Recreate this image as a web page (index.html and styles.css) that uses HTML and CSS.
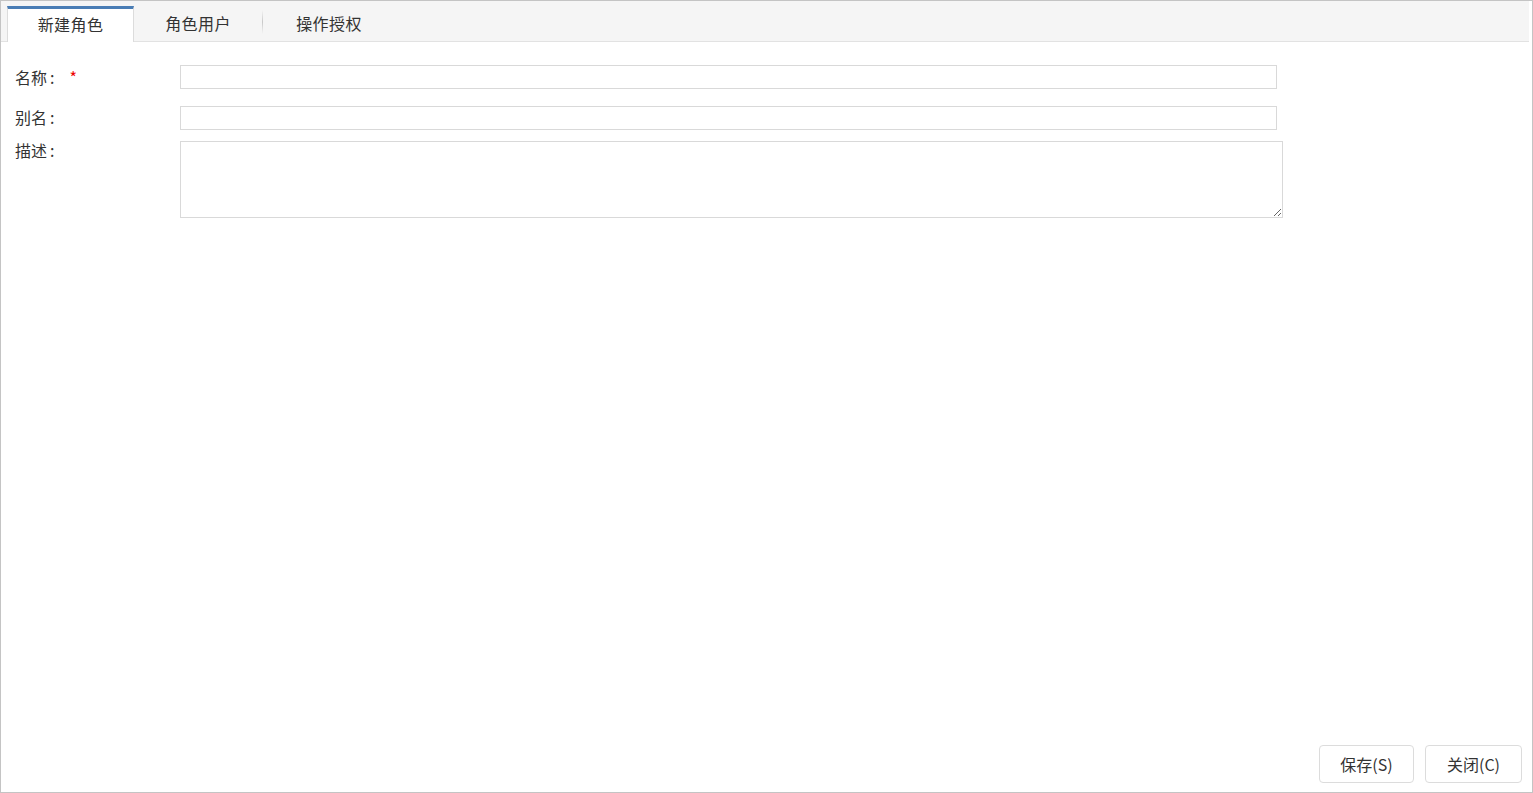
FILE: index.html
```html
<!DOCTYPE html>
<html lang="zh-CN">
<head>
<meta charset="utf-8">
<title>新建角色</title>
<link rel="stylesheet" href="styles.css">
</head>
<body>
<div class="frame">
  <div class="tabbar">
    <div class="tab active">新建角色</div>
    <div class="tab">角色用户</div>
    <div class="sep"></div>
    <div class="tab">操作授权</div>
  </div>
  <div class="content">
    <div class="form">
      <div class="row row-name">
        <label class="label">名称<span class="colon">:</span><span class="req">*</span></label>
        <input class="input" type="text">
      </div>
      <div class="row row-alias">
        <label class="label">别名<span class="colon">:</span></label>
        <input class="input" type="text">
      </div>
      <div class="row row-desc">
        <label class="label">描述<span class="colon">:</span></label>
        <textarea class="textarea"></textarea>
      </div>
    </div>
    <div class="footer">
      <button class="btn">保存(S)</button>
      <button class="btn">关闭(C)</button>
    </div>
  </div>
</div>
</body>
</html>
```

FILE: styles.css
```css
* { box-sizing: border-box; }
html, body {
  margin: 0;
  padding: 0;
  background: #fff;
}
body {
  font-family: "Noto Sans CJK SC", "Open Sans", sans-serif;
  font-size: 16px;
  color: #333;
}
.frame {
  width: 1533px;
  height: 793px;
  border: 1px solid #c4c4c4;
  display: flex;
  flex-direction: column;
}
.tabbar {
  height: 41px;
  margin-right: 3px;
  background: #f5f5f5;
  border-bottom: 1px solid #e2e2e2;
  display: flex;
  align-items: flex-end;
  padding-left: 6px;
}
.tab {
  height: 35px;
  line-height: 32px;
  font-size: 16px;
  color: #333;
  text-align: center;
  width: 126px;
  margin-bottom: -1px;
  letter-spacing: 0.4px;
}
.tab.active {
  width: 127px;
  background: #fff;
  border-top: 3px solid #4a7db5;
  border-left: 1px solid #dcdcdc;
  border-right: 1px solid #dcdcdc;
  height: 36px;
  line-height: 30px;
}
.tab:nth-child(2) { width: 128px; }
.tab:nth-child(4) { width: 132px; }
.sep {
  width: 1px;
  height: 24px;
  margin-bottom: 7px;
  background: linear-gradient(to bottom, #f5f5f5, #c8c8c8 50%, #f5f5f5);
}
.content {
  flex: 1;
  display: flex;
  flex-direction: column;
  justify-content: space-between;
}
.form {
  padding-top: 23px;
  padding-left: 14px;
}
.row {
  display: flex;
  align-items: flex-start;
}
.label {
  width: 165px;
  flex: none;
  font-size: 16px;
  line-height: 24px;
  color: #333;
}
.colon {
  margin-left: 3px;
}
.req {
  color: #e00;
  margin-left: 15px;
  font-size: 16px;
}
.input {
  width: 1097px;
  height: 24px;
  border: 1px solid #d9d9d9;
  padding: 0 4px;
  margin: 0;
  font-family: inherit;
  font-size: 14px;
  outline: none;
}
.row-alias { margin-top: 17px; }
.row-alias .label { margin-top: -1px; }
.row-desc { margin-top: 11px; }
.row-desc .label { margin-top: -3px; }
.textarea {
  width: 1103px;
  height: 77px;
  border: 1px solid #d9d9d9;
  margin: 0;
  padding: 2px 4px;
  font-family: inherit;
  font-size: 14px;
  outline: none;
  resize: both;
}
.footer {
  display: flex;
  justify-content: flex-end;
  gap: 11px;
  padding-right: 10px;
  padding-bottom: 9px;
}
.btn {
  height: 38px;
  padding: 0 10px;
  background: #fff;
  border: 1px solid #dcdcdc;
  border-radius: 4px;
  font-family: inherit;
  font-size: 16px;
  color: #333;
  cursor: pointer;
}
.btn:first-child { width: 95px; }
.btn:last-child { width: 97px; }
```
